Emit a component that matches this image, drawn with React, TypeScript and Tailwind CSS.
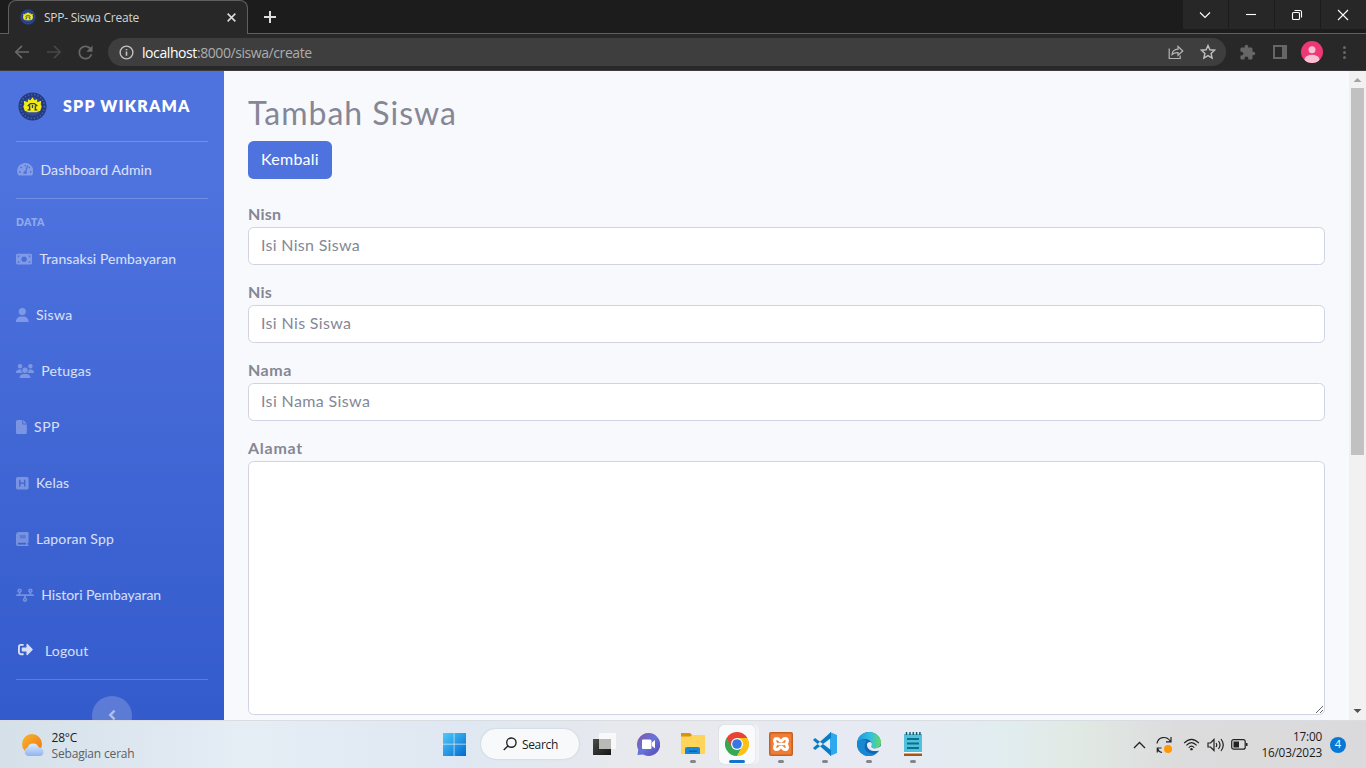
import React from 'react';
import { FaTachometerAlt, FaSignOutAlt, FaAngleLeft } from 'react-icons/fa';
import { FaMoneyBill, FaUser, FaUsers, FaFile, FaSquareH, FaBook, FaTimeline } from 'react-icons/fa6';
import { MdExtension, MdRefresh } from 'react-icons/md';
import type { IconType } from 'react-icons';

type MenuItem = { icon: IconType; label: string; size: string; tracking: string };

const menu: MenuItem[] = [
  { icon: FaMoneyBill, label: 'Transaksi Pembayaran', size: 'w-[16.200px]', tracking: 'tracking-[0.080px]' },
  { icon: FaUser, label: 'Siswa', size: 'w-[12.600px]', tracking: 'tracking-[0.400px]' },
  { icon: FaUsers, label: 'Petugas', size: 'w-[18px]', tracking: 'tracking-[0.200px]' },
  { icon: FaFile, label: 'SPP', size: 'w-[10.800px]', tracking: 'tracking-[0.500px]' },
  { icon: FaSquareH, label: 'Kelas', size: 'w-[12.600px]', tracking: 'tracking-[0.200px]' },
  { icon: FaBook, label: 'Laporan Spp', size: 'w-[12.600px]', tracking: 'tracking-[0.150px]' },
  { icon: FaTimeline, label: 'Histori Pembayaran', size: 'w-[18px]', tracking: 'tracking-[-0.030px]' },
];

function SchoolLogo({ className }: { className: string }) {
  return (
    <svg viewBox="0 0 30 30" className={className}>
      <circle cx="15" cy="15" r="14.500" fill="#243a80" />
      <circle cx="15" cy="15" r="12.300" fill="none" stroke="#4a60a2" strokeWidth="1.800" strokeDasharray="1.300 2" />
      <circle cx="15" cy="15" r="9.800" fill="#2e4b9c" />
      <path d="M15 5.500l2 3 2.500-1 .5 3 4-1.500-.5 4 1 2-1.500 4.500-4 1.500H11l-4-1.500L5.500 15l1-2L6 9l4 1.500.5-3 2.500 1z" fill="#f3ec12" />
      <path d="M10 14.500l3-2.500h4l3 2.500M12 14v4.500M15 13.500v3M18 14v4.500M10 18.500h3m4 0h3" fill="none" stroke="#2d3f5c" strokeWidth="1.400" />
    </svg>
  );
}

function WindowButton({ children }: { children: React.ReactNode }) {
  return (
    <div className="flex h-[29px] w-[45px] items-center justify-center bg-[#272727] pr-[2px] text-white">
      <svg viewBox="0 0 12 12" className="size-3" fill="none" stroke="currentColor" strokeWidth="1.100">{children}</svg>
    </div>
  );
}

function Browser() {
  return (
    <header className="h-[71px] shrink-0 bg-[#282828]">
      <div className="flex h-[34px] bg-[#1c1c1c]">
        <div className="w-2 border-b border-[#606060]" />
        <div className="flex h-[34px] w-[240px] items-center rounded-t-lg border border-b-0 border-[#606060] bg-[#282828] pl-[11px] pr-[9px]">
          <SchoolLogo className="mb-px size-4" />
          <span className="ml-[8px] grow whitespace-nowrap font-['Open_Sans',sans-serif] text-[12px] tracking-[-0.260px] text-[#d5d5d5]">SPP- Siswa Create</span>
          <svg viewBox="0 0 10 10" className="mr-px size-[11px]" stroke="#dedede" strokeWidth="1.400"><path d="M1.500 1.500l7 7m0-7l-7 7" /></svg>
        </div>
        <div className="flex grow border-b border-[#606060]">
          <svg viewBox="0 0 14 14" className="ml-[15px] mt-[10px] size-[14px]" stroke="#dedede" strokeWidth="2"><path d="M7 1v12M1 7h12" /></svg>
          <div className="ml-auto flex gap-px">
            <WindowButton><path d="M1 3.500l5 5 5-5" /></WindowButton>
            <WindowButton><path d="M1 5.500h10" /></WindowButton>
            <WindowButton><rect x="1.500" y="3.500" width="7" height="7" rx="1" /><path d="M3.500 1.500H9a1.500 1.500 0 0 1 1.500 1.500v5.500" /></WindowButton>
            <WindowButton><path d="M1 1l10 10M11 1L1 11" /></WindowButton>
          </div>
        </div>
      </div>
      <div className="flex h-[37px] items-center border-b border-[#3c3c3c] pl-[14px] pr-[15px]">
        <svg viewBox="0 0 16 16" className="size-4" fill="none" stroke="#686868" strokeWidth="1.700"><path d="M15 8H2M8 1.800L1.800 8 8 14.200" /></svg>
        <svg viewBox="0 0 16 16" className="ml-4 size-4" fill="none" stroke="#474747" strokeWidth="1.700"><path d="M1 8h13M8 1.800L14.200 8 8 14.200" /></svg>
        <MdRefresh className="ml-[13px] size-[21px] shrink-0 text-[#686868]" />
        <div className="ml-[12px] flex h-7 w-[1118px] shrink-0 items-center rounded-full bg-[#3e3e3e] pl-[10px] pr-[10px]">
          <svg viewBox="0 0 16 16" className="ml-[0.500px] size-[15px]" fill="none" stroke="#c2c2c2" strokeWidth="1.500"><circle cx="8" cy="8" r="6.800" /><path d="M8 7v4.500M8 4.200v1.500" strokeWidth="1.700" /></svg>
          <span className="ml-[8.500px] font-['Open_Sans',sans-serif] text-[14px] tracking-[-0.420px] text-[#adadad]"><span className="text-white">localhost</span>:8000/siswa/create</span>
          <svg viewBox="0 0 16 16" className="ml-auto size-4" fill="none" stroke="#b5b5b5" strokeWidth="1.200"><path d="M1.200 4.500v10h11v-3M4 10.500c.3-3.300 2.300-5.200 6-5.400V2.500L14.800 7 10 11.300V8.600c-2.700-.2-4.500.4-6 1.900z" /></svg>
          <svg viewBox="0 0 16 16" className="ml-[16px] size-[16px]" fill="none" stroke="#c0c0c0" strokeWidth="1.400"><path d="M8 1.500l1.900 4.300 4.700.4-3.500 3.200 1 4.600L8 11.600 3.900 14l1-4.600-3.500-3.200 4.700-.4z" /></svg>
        </div>
        <MdExtension className="ml-[13px] size-[17px] shrink-0 text-[#666]" />
        <svg viewBox="0 0 14 14" className="ml-[17px] size-[14px] shrink-0"><path d="M0 0h14v14H0zM2 2v10h7V2z" fill="#666" fillRule="evenodd" /></svg>
        <svg viewBox="0 0 22 22" className="ml-[14px] size-[22px] shrink-0"><clipPath id="avatar"><circle cx="11" cy="11" r="11" /></clipPath><g clipPath="url(#avatar)"><path d="M0 0h22v22H0z" fill="#ec3974" /><circle cx="11" cy="8.700" r="3.500" fill="#f9c0d5" /><ellipse cx="11" cy="18.500" rx="7.500" ry="4.700" fill="#f9c0d5" /></g></svg>
        <div className="ml-auto mr-[5px] flex flex-col gap-[2px]"><i className="size-[3px] rounded-full bg-[#666]" /><i className="size-[3px] rounded-full bg-[#666]" /><i className="size-[3px] rounded-full bg-[#666]" /></div>
      </div>
    </header>
  );
}

function Sidebar() {
  return (
    <aside className="h-[1028px] w-56 shrink-0 bg-linear-[180deg,#4e73df_10%,#224abe_100%] px-4 text-[14px] text-white/80">
      <div className="flex h-[70px] items-center pl-[2px]">
        <SchoolLogo className="size-[29px]" />
        <span className="ml-4 whitespace-nowrap pb-px text-[16px] font-extrabold tracking-[1.200px] text-white">SPP WIKRAMA</span>
      </div>
      <hr className="border-white/20" />
      <div className="flex h-14 items-center gap-[7.500px] pl-[0.500px]">
        <FaTachometerAlt className="mb-px h-[14.400px] w-[16.500px] text-white/30" />
        <span className="pb-[2px] tracking-[0.120px]">Dashboard Admin</span>
      </div>
      <hr className="border-white/20" />
      <div className="flex h-[31px] items-end text-[10.400px] font-extrabold leading-[16px] tracking-[0.400px] text-white/40">DATA</div>
      <nav className="pt-px">
        {menu.map(({ icon: Icon, label, size, tracking }) => (
          <div key={label} className="flex h-14 items-center gap-[7.300px]">
            <Icon className={`h-[14.400px] shrink-0 text-white/30 ${size}`} />
            <span className={`whitespace-nowrap pb-[2px] ${tracking}`}>{label}</span>
          </div>
        ))}
        <div className="flex h-14 items-center pl-[1.500px]"><FaSignOutAlt className="mb-[3px] size-[15px]" /><span className="ml-[12.500px] pb-[2px] tracking-[0.150px]">Logout</span></div>
      </nav>
      <hr className="border-white/20" />
      <div className="mx-auto mt-4 flex size-10 items-center justify-center rounded-full bg-white/20 pb-[2px] text-white/50"><FaAngleLeft className="size-4" /></div>
    </aside>
  );
}

function Field({ label, placeholder, tracking, labelTracking }: { label: string; placeholder: string; tracking: string; labelTracking: string }) {
  return (
    <div className="mb-4 h-[62px]">
      <label className={`block h-6 font-bold leading-[22px] ${labelTracking}`}>{label}</label>
      <input placeholder={placeholder} className={`block h-[38px] w-full rounded-[5.600px] border border-[#d1d3e2] bg-white px-3 pb-[3px] placeholder:text-[#858796] ${tracking}`} />
    </div>
  );
}

function Form() {
  return (
    <main className="min-w-0 grow px-6 pt-6 text-[16px] text-[#858796]">
      <h1 className="h-[46px] text-[32px] leading-[36px] tracking-[1px]">Tambah Siswa</h1>
      <button className="mb-6 block h-[38px] w-[84px] rounded-[5.600px] bg-[#4e73df] pb-[2px] tracking-[0.250px] text-white">Kembali</button>
      <Field label="Nisn" placeholder="Isi Nisn Siswa" tracking="tracking-[0.300px]" labelTracking="tracking-[0.250px]" />
      <Field label="Nis" placeholder="Isi Nis Siswa" tracking="tracking-[0.350px]" labelTracking="tracking-[0.250px]" />
      <Field label="Nama" placeholder="Isi Nama Siswa" tracking="tracking-[0.370px]" labelTracking="tracking-[0.500px]" />
      <label className="block h-6 font-bold leading-[22px] tracking-[0.750px]">Alamat</label>
      <textarea className="block h-[254px] w-full resize-y rounded-[5.600px] border border-[#d1d3e2] bg-white px-3 py-1.5" />
    </main>
  );
}

function Scrollbar() {
  return (
    <div className="flex w-[17px] shrink-0 flex-col items-center bg-[#f1f1f1]">
      <svg viewBox="0 0 17 17" className="size-[17px]"><path d="M4.500 11h8l-4-4z" fill="#a3a3a3" /></svg>
      <div className="h-[367px] w-[13px] bg-[#c1c1c1]" />
      <svg viewBox="0 0 17 17" className="mt-auto size-[17px]"><path d="M4.500 6h8l-4 4z" fill="#505050" /></svg>
    </div>
  );
}

function TaskbarApp({ children, running = false, active = false }: { children: React.ReactNode; running?: boolean; active?: boolean }) {
  return (
    <div className={`flex h-[39px] w-9 flex-col items-center rounded-[5px] pt-[7px] ${active ? 'bg-white/75 shadow-[0_0_1px_#aaa,4px_0_0_#f1f2f6]' : ''}`}>
      <svg viewBox="0 0 24 24" className="size-6 shrink-0">{children}</svg>
      {running && <i className={`mt-[4px] h-[3px] shrink-0 rounded-full ${active ? 'w-4 bg-[#0f75d1]' : 'w-[6px] bg-[#858689]'}`} />}
    </div>
  );
}

function Taskbar() {
  return (
    <footer className="flex h-12 shrink-0 border-t border-[#d9dce0] bg-linear-[90deg,#d5e0e9_0%,#e5edf5_18%,#dfe8f2_34%,#e8e9ec_48%,#e7eaf4_64%,#e1edf0_73%,#e1e9e4_79%,#dcdcdd_86%,#dadadc_100%] font-['Open_Sans',sans-serif] text-[12px] text-[#1c1c1c]">
      <div className="flex w-[436px] pl-[21px] pt-[12px]">
        <svg viewBox="0 0 24 24" className="size-6"><defs><linearGradient id="sun" x2="1" y2="1"><stop stopColor="#f9b52c" /><stop offset="1" stopColor="#ed7414" /></linearGradient><linearGradient id="cloud" x2="0" y2="1"><stop stopColor="#dcecff" /><stop offset="1" stopColor="#8fb4f0" /></linearGradient></defs><circle cx="11" cy="11" r="10" fill="url(#sun)" /><path d="M7 23a4.500 4.500 0 0 1-.5-8.500 6 6 0 0 1 11.300 0A4.300 4.300 0 0 1 19 23z" fill="url(#cloud)" /></svg>
        <div className="-mt-[3px] ml-[6.500px] leading-4"><p className="tracking-[-0.200px]">28°C</p><p className="tracking-[-0.170px] text-[#5c5f63]">Sebagian cerah</p></div>
      </div>
      <div className="flex pt-[4px]">
        <TaskbarApp><defs><linearGradient id="win" x2="1" y2="1"><stop stopColor="#4fcbfa" /><stop offset="1" stopColor="#006bd0" /></linearGradient></defs><path d="M1 1h10.700v10.700H1zM12.400 1H24v10.700H12.400zM1 12.400h10.700V24H1zM12.400 12.400H24V24H12.400z" fill="url(#win)" /></TaskbarApp>
        <div className="ml-[9px] mt-[4px] flex h-[30px] w-[98px] items-center rounded-full bg-[#f7f9fb] pl-[22px] shadow-[0_0_2px_#b9c2cc]">
          <svg viewBox="0 0 15 15" className="size-[14px]" fill="none" stroke="#222" strokeWidth="1.500"><circle cx="9" cy="6" r="5" /><path d="M5.500 9.500L.8 14" /></svg><span className="ml-[5px] pt-px tracking-[-0.350px]">Search</span>
        </div>
        <div className="ml-[7px] flex gap-2">
          <TaskbarApp><defs><linearGradient id="dark" y2="1"><stop stopColor="#4b4b49" /><stop offset="1" stopColor="#151515" /></linearGradient></defs><path d="M1 7h18v16H1z" fill="url(#dark)" /><path d="M7 1h18v16H7z" fill="#f8f8f8" /><path d="M7 7h12v10H7z" fill="#b9b9b8" /></TaskbarApp>
          <TaskbarApp><defs><linearGradient id="meet" x2="1" y2="1"><stop stopColor="#8656a2" /><stop offset=".5" stopColor="#6674dc" /><stop offset="1" stopColor="#5944af" /></linearGradient></defs><path d="M12.500 1A11.500 11.500 0 1 1 7 22.500L1.500 23l.7-5.300A11.500 11.500 0 0 1 12.500 1z" fill="url(#meet)" /><path d="M6 8.500q0-1 1-1h7q1.500 0 1.500 1.500v7q0 1-1 1H7q-1 0-1-1zM16 10.500l3-2.500v8.500L16 14z" fill="#fff" /></TaskbarApp>
          <div className="ml-px flex gap-2">
            <TaskbarApp running><path d="M0 1h9l2 2v4H0z" fill="#d89308" /><path d="M0 4.500h9l2-1.500h13v19H0z" fill="#ffd45b" /><path d="M4 22v-5q0-2 2-2h11q2 0 2 2v5z" fill="#1687d9" /><path d="M8 18.500h8V20H8z" fill="#0964b0" /></TaskbarApp>
            <TaskbarApp running active><path d="M1.600 6A12 12 0 0 0 12 24l5.200-9L12 12z" fill="#35a852" /><path d="M22.400 6A12 12 0 0 1 12 24l5.200-9L12 6z" fill="#fbc116" /><path d="M12 6H22.400A12 12 0 0 0 1.600 6l5.200 9z" fill="#e94335" /><circle cx="12" cy="12" r="6" fill="#fff" /><circle cx="12" cy="12" r="4.800" fill="#3578e5" /></TaskbarApp>
            <TaskbarApp running><rect width="24" height="24" rx="2" fill="#c8601f" /><rect x="1.500" y="1.500" width="21" height="21" rx="1" fill="#ee7e36" /><path d="M8 6.500c-3 0-3 3.500-.8 5.500-2.200 2-2.200 5.500.8 5.500 2.500 0 2-2.500 4-2.500s1.500 2.500 4 2.500c3 0 3-3.500.8-5.500 2.200-2 2.200-5.500-.8-5.500-2.500 0-2 2.500-4 2.500s-1.500-2.500-4-2.500z" fill="#ee7e36" stroke="#fff" strokeWidth="3.200" /><path d="M9 12h6" stroke="#fff" strokeWidth="2.500" /></TaskbarApp>
            <TaskbarApp running><path d="M17 0l7 3v18l-7 3z" fill="#30a8ed" /><path d="M0 8l2-2L18 18v6zM0 16l2 2L18 6V0z" fill="#087cc4" /></TaskbarApp>
            <TaskbarApp running><defs><linearGradient id="edge" x1="0" x2="1"><stop stopColor="#1b98d8" /><stop offset=".55" stopColor="#32bfe3" /><stop offset="1" stopColor="#67da61" /></linearGradient></defs><circle cx="12" cy="12" r="12" fill="#1268b5" /><path d="M0 11C1 4 6 0 12 0c7 0 12 5 12 10.500 0 4-3 6-6 6-2.500 0-4-1-3.500-3C16 7 5 4 0 11z" fill="url(#edge)" /><path d="M8 12c-2 7 4 11 11 9.700A12 12 0 0 1 0 12c2-5 8-5 10-2.500A5 5 0 0 0 8 12z" fill="#1589d2" /><path d="M10 12c-.5 6 6 8 12.300 6.400l2-2L24 14c-3 3-9 3-9.500 1-.5-1 1-2 0-4s-4-1-4.500 1z" fill="#e9edf3" /></TaskbarApp>
            <TaskbarApp running><path d="M3 2h18v18H3z" fill="#50c0dc" /><path d="M5.500 0v3M9 0v3m3.300-3v3m3.300-3v3m3.300-3v3" stroke="#20586b" strokeWidth="1.500" /><path d="M6 7h12M6 11.500h12M6 16h12" stroke="#09718b" strokeWidth="1.800" /><path d="M3 20h18v1.500H3z" fill="#fff" /><path d="M3 21.500h18V24H3z" fill="#a45616" /></TaskbarApp>
          </div>
        </div>
      </div>
      <div className="ml-auto flex items-center pr-[20px]">
        <svg viewBox="0 0 12 8" className="mr-[9px] h-[8px] w-[13px]" fill="none" stroke="#222" strokeWidth="1.300"><path d="M.5 7L6 1.500 11.500 7" /></svg>
        <svg viewBox="0 0 18 18" className="size-[18px]" fill="none" stroke="#222" strokeWidth="1.200"><path d="M2 7.500C3 .8 11.500-.8 15.500 5.500M16 1v4.800h-5M7 16.500C4.500 16 3 14.500 2.500 12.500M6.500 12H2.300v4.500" /><circle cx="13" cy="13" r="4" fill="#ff9707" stroke="none" /></svg>
        <svg viewBox="0 0 18 14" className="ml-[10px] h-[13px] w-[17px]" fill="none" stroke="#222" strokeWidth="1.200"><path d="M1 5.500Q9-2.500 17 5.500M3.500 8Q9 2 14.500 8M6 10.500Q9 7 12 10.500" /><circle cx="9" cy="12" r="1.300" fill="#222" stroke="none" /></svg>
        <svg viewBox="0 0 18 14" className="ml-[7px] h-[14px] w-[18px]" fill="none" stroke="#222" strokeWidth="1.200"><path d="M1 5h2.500L7 1.500v11L3.500 9H1zM9 5q1.500 2 0 4M11.500 3q3 4 0 8M14 1q4.500 6 0 12" /></svg>
        <svg viewBox="0 0 17 11" className="ml-[6px] h-[11px] w-[17px]"><rect x=".7" y=".7" width="13.500" height="9.500" rx="2" fill="none" stroke="#222" strokeWidth="1.200" /><path d="M2.500 2.500H8v6H2.500zM15 4h1.500v3H15z" fill="#222" /></svg>
        <div className="mb-[2px] ml-[12px] w-[62px] text-right text-[11.800px] leading-4 tracking-[-0.200px]"><p>17:00</p><p>16/03/2023</p></div>
        <span className="ml-2 flex size-4 items-center justify-center rounded-full bg-[#0878d4] text-[11px] text-white">4</span>
      </div>
    </footer>
  );
}

export default function App() {
  return (
    <div className="flex h-screen flex-col overflow-hidden bg-[#f8f9fc] font-[Lato,sans-serif]">
      <Browser />
      <div className="flex h-[649px] shrink-0 overflow-hidden"><Sidebar /><Form /><Scrollbar /></div>
      <Taskbar />
    </div>
  );
}
